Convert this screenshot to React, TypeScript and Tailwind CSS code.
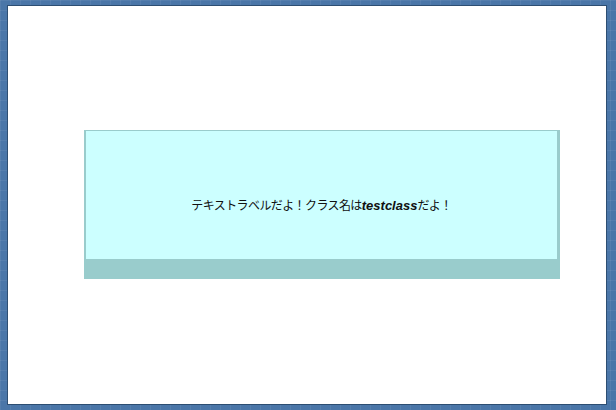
import React from 'react';

export default function App() {
  return (
    <div className="w-[616px] h-[410px] bg-[#4a76a8] bg-[linear-gradient(rgba(255,255,255,0.06)_1px,transparent_1px),linear-gradient(90deg,rgba(255,255,255,0.06)_1px,transparent_1px)] bg-[size:10px_10px] pt-[5px] pl-[7px]">
      {/* Stage */}
      <div className="w-[600px] h-[400px] bg-white border border-[#2d4e72] pt-[124px] pl-[76px]">
        {/* Label box */}
        <div className="w-[476px] h-[149px] flex flex-col bg-[#ccffff] border-l-2 border-t border-r-[3px] border-[#99cccc]">
          <div className="flex-1 flex items-center justify-center pt-[21px]">
            <span className="text-[12px] text-[#111] font-['Liberation_Sans','Noto_Sans_CJK_JP',sans-serif] tracking-[-0.6px]">
              テキストラベルだよ！クラス名は<b className="italic font-bold text-[13px] tracking-normal">testclass</b>だよ！
            </span>
          </div>
          <div className="h-[20px] bg-[#99cccc]" />
        </div>
      </div>
    </div>
  );
}
